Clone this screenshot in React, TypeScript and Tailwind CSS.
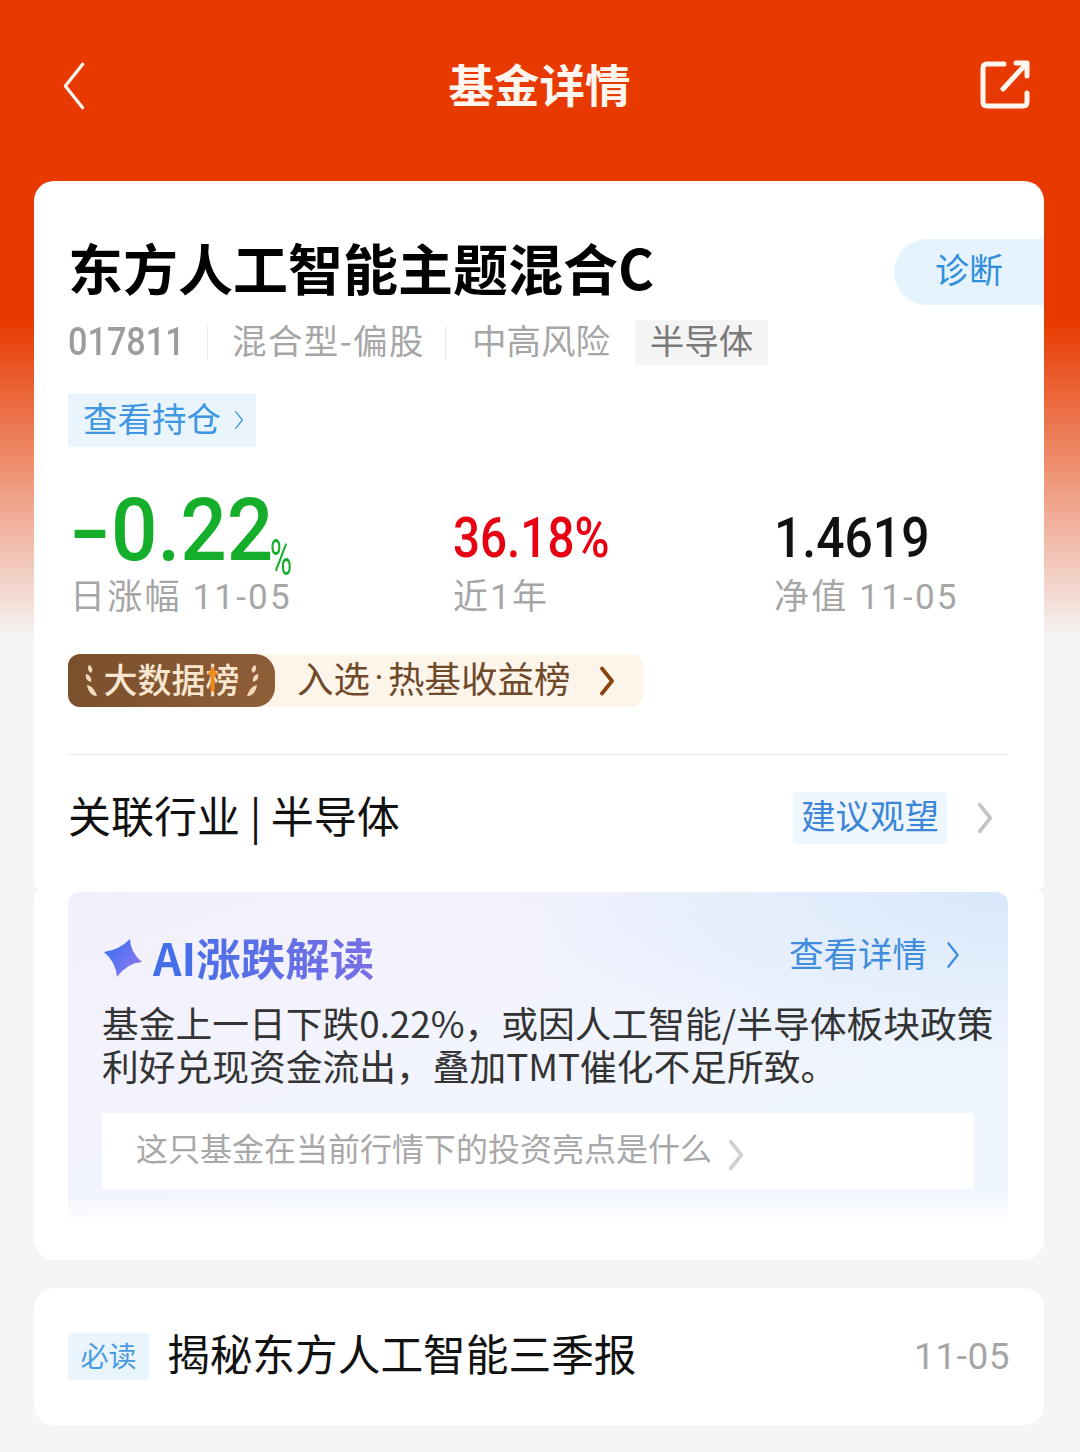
import React from 'react';

const cjk = "font-['Noto_Sans_CJK_SC','Noto_Sans',sans-serif]";

const Chevron = ({ className, width = 2 }: { className?: string; width?: number }) => (
    <svg viewBox="0 0 12 24" fill="none" stroke="currentColor" strokeWidth={width} strokeLinecap="round" strokeLinejoin="round" className={className}>
        <path d="M2 2 L10 12 L2 22" />
    </svg>
);

const Laurel = ({ flip }: { flip?: boolean }) => (
    <svg viewBox="0 0 16 36" className={`w-[16px] h-[36px] ${flip ? '-scale-x-100' : ''}`} fill="#f3d9bb">
        <path d="M6 2 C10 4 10 8 8 10 C5 8 4 5 6 2Z" />
        <path d="M3 11 C7 12 9 15 8 19 C4 18 2 15 3 11Z" />
        <path d="M4 22 C9 23 12 27 14 33 C8 33 5 28 4 22Z" />
    </svg>
);

const Stat = ({ className, label, children }: { className: string; label: string; children: React.ReactNode }) => (
    <div className={className}>
        <div className="h-[86px] flex items-end pb-[5px]">{children}</div>
        <div className="h-[40px] leading-[44px] text-[35px] tracking-[2.2px] text-[#a6a6a6] whitespace-nowrap font-['Roboto','Noto_Sans_CJK_SC',sans-serif]">{label}</div>
    </div>
);

export default function App() {
    return (
        <div className={`${cjk} w-[1080px] h-[1452px] overflow-hidden bg-[linear-gradient(180deg,#e83a00_0px,#e83a00_320px,#f5f5f5_640px)]`}>
            {/* Header */}
            <div className="h-[181px] flex items-start justify-between pt-[60px] pl-[58px] pr-[50px] text-[#fff6ef]">
                <Chevron className="w-[32px] h-[52px] -scale-x-100" width={1.5} />
                <div className="text-[45.5px] leading-[50px] font-bold ml-[9px] pb-[4px] -mt-[2px]">基金详情</div>
                <svg viewBox="0 0 50 50" fill="none" stroke="currentColor" strokeWidth="5" strokeLinecap="round" strokeLinejoin="round" className="w-[50px] h-[50px]">
                    <path d="M24 4 H7 Q3 4 3 8 V42 Q3 46 7 46 H43 Q47 46 47 42 V33" />
                    <path d="M23 29 L46 4 M36 3 H47 V16" />
                </svg>
            </div>

            {/* Fund card */}
            <div className="ml-[34px] mr-[36px] bg-white rounded-t-[20px] rounded-b-[8px] h-[709px] pt-[58px] pl-[34px]">
                <div className="h-[66px] flex items-center justify-between">
                    <div className="text-[55px] leading-[66px] font-bold text-black whitespace-nowrap pb-[12px]">东方人工智能主题混合C</div>
                    <div className="w-[150px] h-[66px] rounded-l-[33px] bg-[#e6f3fc] text-[#2f8fdc] text-[34px] flex items-center pl-[41px] pb-[8px]">诊断</div>
                </div>
                <div className="mt-[15px] h-[45px] flex items-center text-[34.5px] text-[#a6a6a6] whitespace-nowrap">
                    <span className="font-['Roboto',sans-serif] font-medium text-[38px] w-[115px] scale-x-[.9] origin-left text-[#9c9c9c]">017811</span>
                    <span className="w-px h-[34px] bg-[#e8e8e8] ml-[24px] mr-[24px]" />
                    <span className="w-[190px] pb-[6px] tracking-[1.4px]">混合型-偏股</span>
                    <span className="w-px h-[34px] bg-[#e8e8e8] ml-[23px] mr-[26px]" />
                    <span className="pb-[6px]">中高风险</span>
                    <span className="ml-[25px] h-[45px] w-[133px] bg-[#f4f4f4] text-[#7a7a7a] flex items-center justify-center pb-[6px]">半导体</span>
                </div>
                <div className="mt-[29px] w-[188px] h-[53px] bg-[#eaf4fd] text-[#3f96e3] text-[34.5px] flex items-center pl-[15px] pb-[6px]">
                    查看持仓
                    <Chevron className="w-[10px] h-[20px] ml-[13px] mt-[4px]" width={1.6} />
                </div>

                {/* Stats */}
                <div className="mt-[43px] flex pl-[2px]">
                    <Stat className="w-[383px]" label="日涨幅 11-05">
                        <div className="flex items-end text-[#14ae2a] font-['Roboto',sans-serif] -mb-[2px]">
                            <span className="text-[88px] leading-[86px] font-medium h-[86px] whitespace-nowrap">
                                <span className="inline-block scale-x-[1.35] origin-left mr-[11px]">-</span>
                                <span className="inline-block w-[155px] scale-x-[.93] origin-left">0.22</span>
                            </span>
                            <span className="inline-block text-[50px] leading-[50px] -mb-[10px] ml-[4px] w-[26px] scale-x-[.6] origin-left">%</span>
                        </div>
                    </Stat>
                    <Stat className="w-[321px]" label="近1年">
                        <div className="text-[#e60012] font-['Roboto',sans-serif] text-[56px] leading-[66px] font-medium origin-left scale-x-[.85]">36.18%</div>
                    </Stat>
                    <Stat className="w-[270px]" label="净值 11-05">
                        <div className="text-[#111] font-['Roboto',sans-serif] text-[56px] leading-[66px] font-medium origin-left scale-x-[.89]">1.4619</div>
                    </Stat>
                </div>

                {/* Ranking banner */}
                <div className="mt-[38px] w-[575px] h-[53px] rounded-[12px] bg-[#fdf4ea] flex items-center">
                    <div className="relative w-[207px] h-[53px] rounded-l-[12px] rounded-r-[20px] bg-[linear-gradient(100deg,#7a4f2c,#8f5f38)] flex items-center justify-center gap-[5px] text-[#f8e6d0] text-[34px] font-medium">
                        <Laurel />
                        <span className="relative pb-[4px]">
                            大数据榜
                            <svg viewBox="0 0 14 32" className="absolute right-[22px] top-[11px] w-[11px] h-[30px]" fill="#f08a1a">
                                <path d="M7 0 L14 11 H9.5 V32 H4.5 V11 H0Z" />
                            </svg>
                        </span>
                        <Laurel flip />
                    </div>
                    <div className="ml-[22px] text-[36.5px] text-[#6f4a2a] whitespace-nowrap pb-[4px] flex items-center">
                        入选<span className="w-[18px] text-center font-['Roboto',sans-serif]">·</span>热基收益榜
                    </div>
                    <Chevron className="w-[18px] h-[30px] ml-[27px] text-[#8a4310]" width={3} />
                </div>

                <div className="mt-[47px] mr-[36px] h-px bg-[#ececec]" />

                <div className="mt-[37px] h-[52px] flex items-center">
                    <div className="text-[43px] text-[#111] w-[725px] whitespace-nowrap pb-[8px]">关联行业 | 半导体</div>
                    <div className="w-[154px] h-[52px] bg-[#f0f6fd] text-[#3c86d8] text-[34.5px] rounded-[4px] flex items-center justify-center pb-[6px]">建议观望</div>
                    <Chevron className="w-[18px] h-[32px] ml-[29px] text-[#c4c4c4]" width={2.8} />
                </div>
            </div>

            {/* AI section */}
            <div className="ml-[34px] mr-[36px] bg-white rounded-t-[8px] rounded-b-[20px] h-[370px] pt-[2px] pl-[34px] pr-[36px]">
                <div className="relative h-[334px] rounded-t-[12px] overflow-hidden bg-[linear-gradient(180deg,rgba(255,255,255,0)_0%,rgba(255,255,255,0)_90%,#fff_100%),radial-gradient(ellipse_at_100%_0%,#d9e8fb_0%,rgba(217,232,251,0)_40%),linear-gradient(160deg,#f1effb_0%,#f3f3fd_30%,#f0f6fe_70%)] pl-[34px]">
                    <div className="h-[109px] pt-[36px] flex items-start">
                        <svg viewBox="0 0 40 40" className="w-[40px] h-[40px] mt-[10px] ml-[1px]">
                            <defs>
                                <linearGradient id="star" x1="0" y1="0" x2="1" y2="1">
                                    <stop offset="0" stopColor="#2f6ff0" />
                                    <stop offset="1" stopColor="#9b7af0" />
                                </linearGradient>
                            </defs>
                            <path d="M1 14 Q16 12 27 1 Q27 14 39 24 Q24 25 14 39 Q13 24 1 14Z" fill="url(#star)" />
                        </svg>
                        <div className="ml-[10px] text-[44.5px] leading-[58px] font-bold text-transparent bg-clip-text bg-[linear-gradient(90deg,#3f6fe8,#7a6fe6)]">AI涨跌解读</div>
                        <div className="absolute right-[81px] top-[36px] text-[34.5px] leading-[48px] text-[#3f8ddc]">查看详情</div>
                        <Chevron className="absolute right-[47px] top-[49px] w-[16px] h-[28px] text-[#3f8ddc]" width={2} />
                    </div>
                    <div className="text-[36.75px] leading-[43px] text-[#333] whitespace-nowrap">
                        <div>基金上一日下跌0.22%，或因人工智能/半导体板块政策</div>
                        <div>利好兑现资金流出，叠加TMT催化不足所致。</div>
                    </div>
                    <div className="mt-[26px] mr-[34px] h-[76px] bg-white flex items-center pl-[34px] text-[32px] text-[#a8a8a8] whitespace-nowrap">
                        <span className="pb-[8px]">这只基金在当前行情下的投资亮点是什么</span>
                        <Chevron className="w-[18px] h-[32px] ml-[15px] mt-[8px] text-[#cfcfcf]" width={2.8} />
                    </div>
                </div>
            </div>

            {/* News card */}
            <div className="mt-[28px] ml-[34px] mr-[36px] h-[137px] bg-white rounded-[20px] px-[34px] flex items-center">
                <div className="w-[81px] h-[47px] bg-[#eaf4fd] text-[#4a9ae0] text-[28px] rounded-[4px] flex items-center justify-center pb-[4px]">必读</div>
                <div className="ml-[18px] text-[42.7px] text-[#111] whitespace-nowrap pb-[8px]">揭秘东方人工智能三季报</div>
                <div className="ml-auto text-[37px] text-[#a6a6a6] font-['Roboto',sans-serif] tracking-[.5px]">11-05</div>
            </div>
        </div>
    );
}
